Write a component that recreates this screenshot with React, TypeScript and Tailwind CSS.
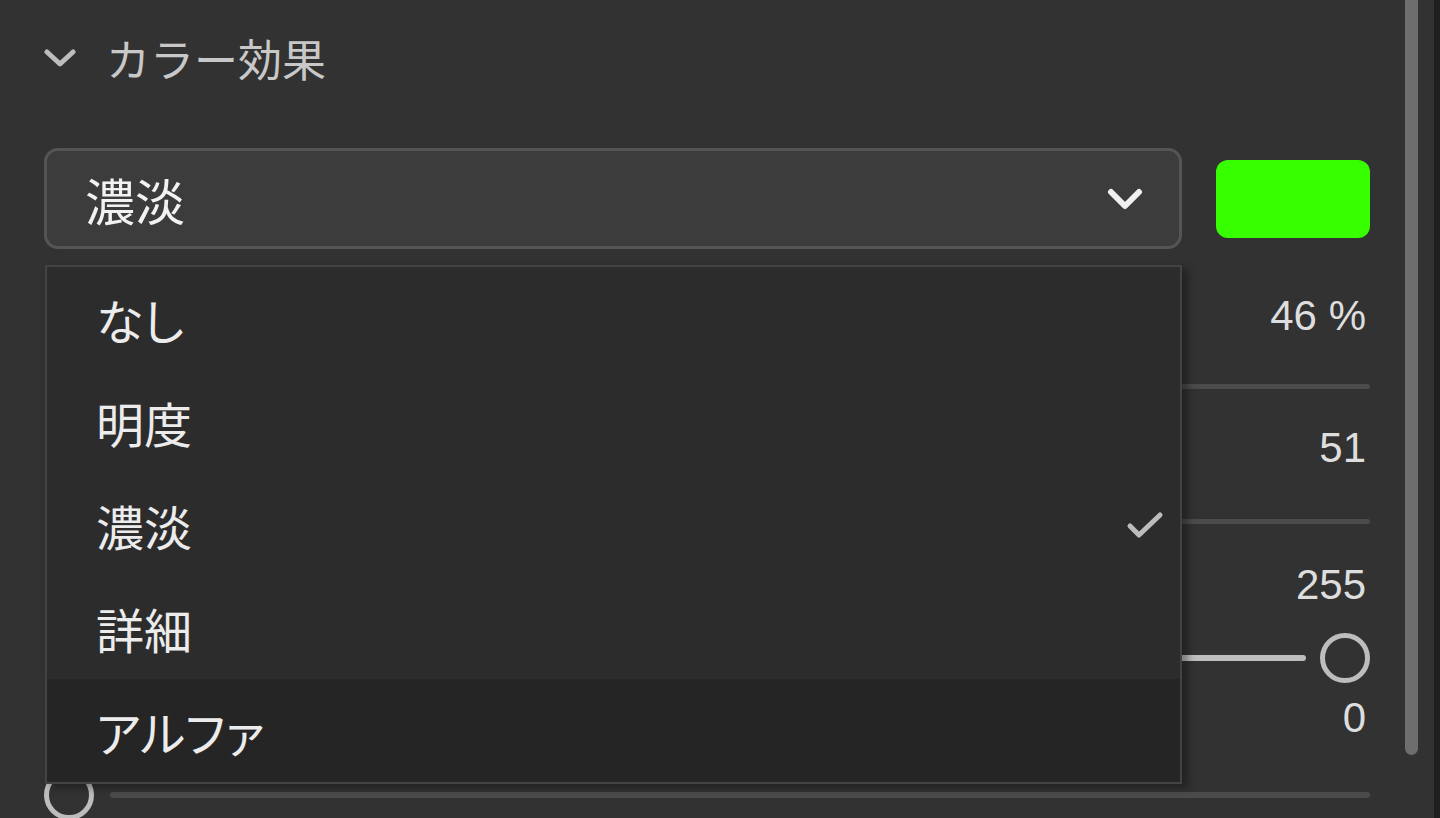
// Colour-effect panel with the mode picker open over the slider rows.
const JP = { fontFamily: '"Noto Sans CJK JP", "Noto Sans", sans-serif' };
const NUM = { fontFamily: '"Liberation Sans", Arial, sans-serif' };

const OPTIONS = ['なし', '明度', '濃淡', '詳細', 'アルファ'];
const SELECTED = '濃淡';
const HOVERED = 'アルファ';

function Knob() {
  return <span className="h-[50px] w-[50px] shrink-0 rounded-full border-[5px] border-[#bdbdbd] bg-[#323232]" />;
}

function Value({ children, pt }: { children: string; pt: string }) {
  return (
    <div className={`flex justify-end pr-[4px] ${pt}`}>
      <span style={NUM} className="h-[40px] text-[42px] leading-[40px] text-[#dedede]">
        {children}
      </span>
    </div>
  );
}

export default function App() {
  return (
    <div className="flex h-[818px] w-[1440px] overflow-hidden bg-[#323232]">
      {/* ── Panel body ─────────────────────────────────────────── */}
      <div className="flex w-[1370px] shrink-0 flex-col pl-[44px]">
        <div className="flex h-[116px] shrink-0 items-center gap-[30px]">
          <svg width="32" height="20" viewBox="0 0 32 20" className="shrink-0">
            <path d="M3 4 L16 16 L29 4" fill="none" stroke="#bdbdbd" strokeWidth="5" strokeLinecap="round" strokeLinejoin="round" />
          </svg>
          <span style={JP} className="text-[44px] leading-none text-[#c8c8c8]">カラー効果</span>
        </div>

        {/* Select + colour swatch */}
        <div className="mt-[32px] flex shrink-0 items-center gap-[34px]">
          <div className="relative w-[1138px] shrink-0">
            <div className="flex h-[101px] items-center justify-between rounded-[14px] border-[3px] border-[#555555] bg-[#3c3c3c] pl-[38px] pr-[36px]">
              <span style={JP} className="text-[50px] leading-none text-[#f2f2f2]">{SELECTED}</span>
              <svg width="36" height="26" viewBox="0 0 36 26">
                <path d="M4 6 L18 20 L32 6" fill="none" stroke="#f0f0f0" strokeWidth="6" strokeLinecap="round" strokeLinejoin="round" />
              </svg>
            </div>

            {/* Open dropdown (overlay) */}
            <div className="absolute left-[1px] top-[117px] z-10 flex w-[1137px] flex-col border-2 border-[#434343] bg-[#2c2c2c] shadow-[6px_4px_8px_rgba(0,0,0,0.35)]">
              {OPTIONS.map((o) => (
                <div
                  key={o}
                  className={`flex h-[103px] items-center justify-between pl-[49px] pr-[16px] ${o === HOVERED ? 'bg-[#252525]' : ''}`}
                >
                  <span style={JP} className="text-[48px] leading-none text-[#ececec] [font-feature-settings:'palt']">{o}</span>
                  {o === SELECTED && (
                    <svg width="38" height="30" viewBox="0 0 38 30">
                      <path d="M4 16 L13 25 L34 5" fill="none" stroke="#bcbcbc" strokeWidth="5" strokeLinecap="round" strokeLinejoin="round" />
                    </svg>
                  )}
                </div>
              ))}
            </div>
          </div>
          <div className="h-[78px] w-[154px] shrink-0 rounded-[12px] bg-[#37ff00]" />
        </div>

        {/* Slider rows (mostly hidden under the menu) */}
        <div className="flex flex-col">
          <Value pt="pt-[47px]">46 %</Value>
          <div className="ml-[6px] mt-[48px] h-[5px] rounded-full bg-[#4b4b4b]" />
          <Value pt="pt-[39px]">51</Value>
          <div className="ml-[6px] mt-[51px] h-[5px] rounded-full bg-[#4b4b4b]" />
          <Value pt="pt-[41px]">255</Value>
          <div className="ml-[6px] mt-[28px] flex h-[50px] items-center gap-[14px]">
            <div className="h-[6px] flex-1 rounded-full bg-[#bdbdbd]" />
            <Knob />
          </div>
          <Value pt="pt-[15px]">0</Value>
          <div className="mt-[32px] flex h-[50px] items-center gap-[16px]">
            <Knob />
            <div className="h-[6px] flex-1 rounded-full bg-[#4b4b4b]" />
          </div>
        </div>
      </div>

      {/* ── Scrollbar ───────────────────────────────────────────── */}
      <div className="flex flex-1">
        <div className="ml-[35px] h-[755px] w-[13px] rounded-b-full bg-[#6e6e6e]" />
        <div className="flex-1" />
        <div className="w-[6px] bg-[#1f1f1f]" />
      </div>
    </div>
  );
}
